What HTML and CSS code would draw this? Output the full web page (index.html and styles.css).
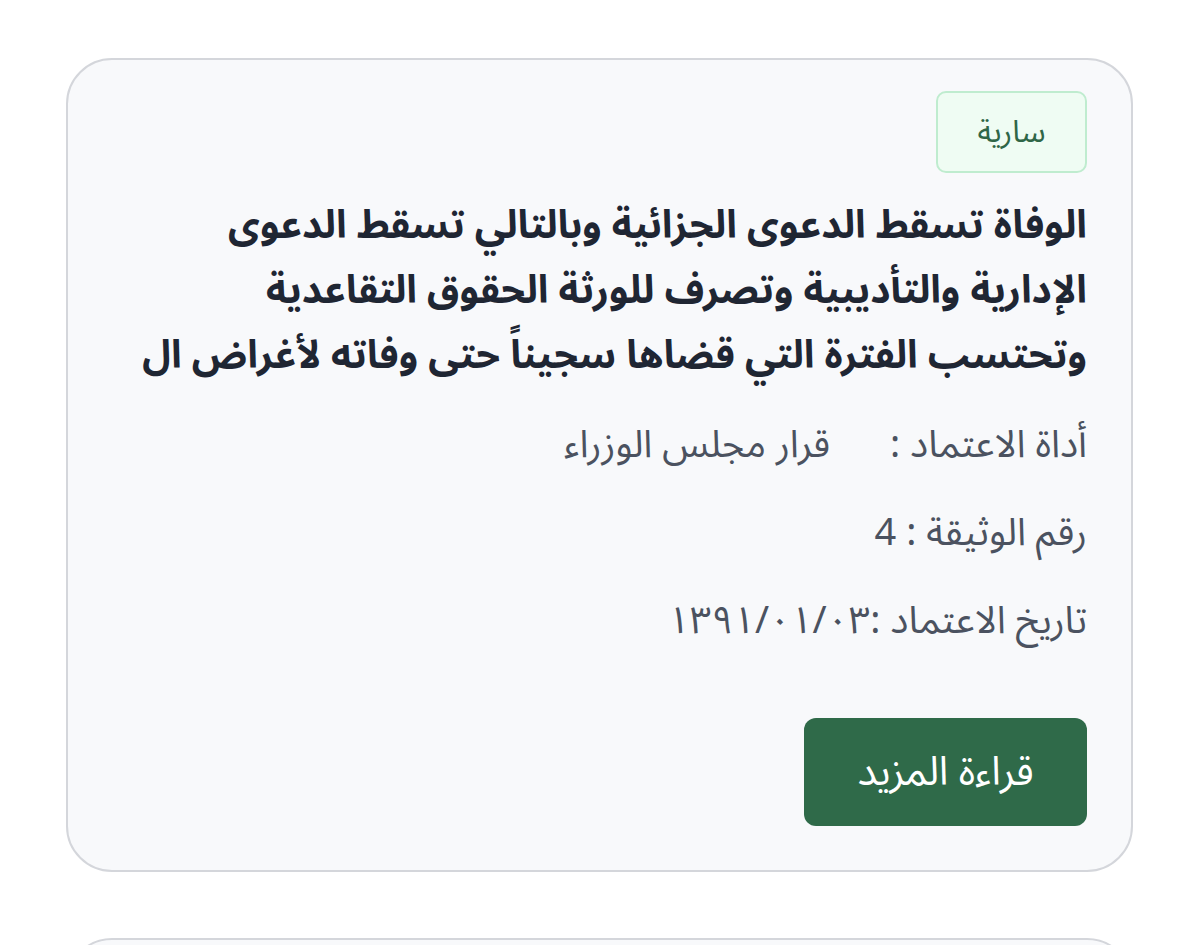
FILE: index.html
```html
<!DOCTYPE html>
<html lang="ar" dir="rtl">
<head>
<meta charset="utf-8">
<link rel="stylesheet" href="styles.css">
</head>
<body>
<div class="list">
  <article class="card">
    <span class="badge">سارية</span>
    <h2 class="title">الوفاة تسقط الدعوى الجزائية وبالتالي تسقط الدعوى الإدارية والتأديبية وتصرف للورثة الحقوق التقاعدية وتحتسب الفترة التي قضاها سجيناً حتى وفاته لأغراض ال</h2>
    <p class="meta"><span class="label">أداة الاعتماد :</span><span class="value">قرار مجلس الوزراء</span></p>
    <p class="meta">رقم الوثيقة : 4</p>
    <p class="meta">تاريخ الاعتماد :١٣٩١/٠١/٠٣</p>
    <a class="btn" href="#">قراءة المزيد</a>
  </article>
  <article class="card next"></article>
</div>
</body>
</html>
```
FILE: styles.css
```css
* { box-sizing: border-box; }
html, body { margin: 0; padding: 0; background: #ffffff; }
body {
  font-family: "Noto Sans Arabic", "Noto Sans", "DejaVu Sans", sans-serif;
  overflow: hidden;
  height: 945px;
}
.list {
  padding: 58px 67px 0 66px;
  display: flex;
  flex-direction: column;
  gap: 66px;
}
.card {
  background: #f8f9fb;
  border: 2px solid #d4d6db;
  border-radius: 46px;
  padding: 31px 44px 44px 44px;
  display: flex;
  flex-direction: column;
  align-items: flex-start;
}
.badge {
  display: inline-block;
  background: #effcf3;
  border: 2px solid #bfeccf;
  border-radius: 10px;
  color: #2f6647;
  font-size: 31px;
  line-height: 40px;
  padding: 19px 0;
  width: 151px;
  text-align: center;
}
.title {
  margin: 20px 0 0 0;
  font-size: 39px;
  line-height: 65px;
  font-weight: 700;
  color: #1f2633;
}
.meta {
  margin: 0;
  color: #4b5260;
  font-size: 38px;
  line-height: 52px;
}
.title + .meta { margin-top: 31px; }
.meta + .meta { margin-top: 36px; }
.value { margin-right: 60px; }
.btn {
  margin-top: 71px;
  display: inline-flex;
  align-items: center;
  justify-content: center;
  width: 283px;
  height: 108px;
  background: #2f6a49;
  color: #ffffff;
  border-radius: 12px;
  font-size: 40px;
  text-decoration: none;
}
.next { height: 200px; }
```
